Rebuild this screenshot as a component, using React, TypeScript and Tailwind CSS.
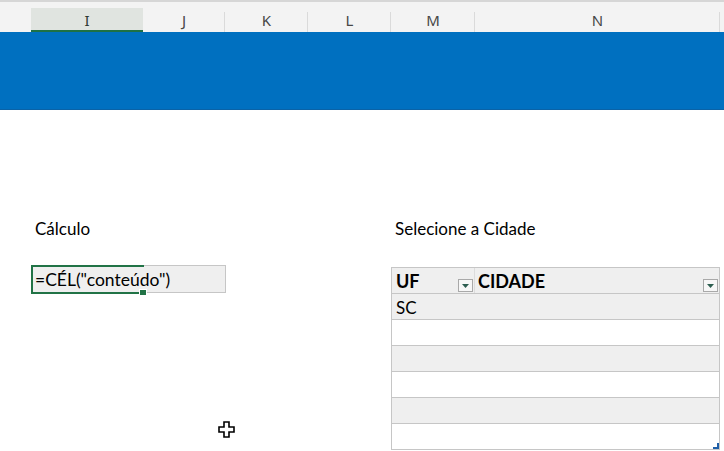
import React from "react";

const cols = [
  { label: "", w: 31 },
  { label: "I", w: 112, sel: true },
  { label: "J", w: 82 },
  { label: "K", w: 83 },
  { label: "L", w: 83 },
  { label: "M", w: 84 },
  { label: "N", w: 245 },
];

function DropBtn() {
  return (
    <div className="flex h-[13px] w-[15px] items-center justify-center border border-[#a9a9a9] bg-[#f7f7f7]">
      <svg width="7" height="4" viewBox="0 0 7 4">
        <path d="M0 0 L7 0 L3.5 4 Z" fill="#2d5e50" />
      </svg>
    </div>
  );
}

export default function App() {
  const rows = ["SC", "", "", "", "", ""];
  return (
    <div
      className="relative h-[451px] w-[724px] overflow-hidden bg-white text-black"
      style={{ fontFamily: "Lato, 'Noto Sans', sans-serif" }}
    >
      {/* Column header */}
      <div className="flex h-[32px] border-t-2 border-[#d6d6d6] bg-[#f3f3f3]">
        {cols.map((c, i) => (
          <div
            key={i}
            style={{ width: c.w }}
            className={
              c.sel
                ? "relative mt-[6px] flex h-[24px] shrink-0 items-center justify-center border-b-2 border-[#1e7145] bg-[#e0e4e0] pt-[2px] text-[15px] text-[#2f3a33]"
                : "relative flex h-[30px] shrink-0 items-center justify-center pt-[7px] text-[15px] text-[#474747]"
            }
          >
            <span style={{ fontFamily: "'Noto Sans', sans-serif" }}>{c.label}</span>
            {i > 1 && (
              <div className="absolute right-0 top-[10px] h-[20px] w-px bg-[#dadada]" />
            )}
          </div>
        ))}
      </div>

      {/* Blue band */}
      <div className="h-[78px] border-b border-[#0a62a6] bg-[#0070c0]" />

      {/* Body */}
      <div className="flex pt-[105px]">
        {/* Left block */}
        <div className="ml-[31px] flex w-[195px] flex-col">
          <div className="flex h-[26px] items-center pl-[4px] pt-[1px] text-[17px]">Cálculo</div>
          <div className="h-[24px]" />
          <div className="relative h-[28px] w-[195px] border border-[#c6c6c6] bg-[#efefef]">
            <div className="absolute -left-px -top-px h-[29px] w-[113px] border-2 border-r-0 border-[#217346]" />
            <div className="absolute left-[108px] top-[24px] h-[5px] w-[6px] bg-[#217346] outline outline-1 outline-white" />
            <div className="relative flex h-full items-center pl-[3px] pt-[1px] text-[17.5px] leading-none">
              =CÉL("conteúdo")
            </div>
          </div>
        </div>

        {/* Right block */}
        <div className="ml-[165px] flex w-[329px] flex-col">
          <div className="flex h-[26px] items-center pl-[4px] pt-[1px] text-[17px]">Selecione a Cidade</div>
          <div className="h-[26px]" />
          <div className="relative border-x border-t border-[#c6c6c6]">
            <div className="flex h-[26px] border-b border-[#c6c6c6] bg-[#efefef]">
              <div className="flex w-[83px] shrink-0 items-center justify-between border-r border-[#dcdcdc] pl-[4px] pr-[1px]">
                <span className="pt-[2px] text-[18px] font-bold">UF</span>
                <div className="self-end pb-[1px]">
                  <DropBtn />
                </div>
              </div>
              <div className="flex flex-1 items-center justify-between pl-[3px] pr-[1px]">
                <span className="pt-[2px] text-[18px] font-bold">CIDADE</span>
                <div className="self-end pb-[1px]">
                  <DropBtn />
                </div>
              </div>
            </div>
            {rows.map((r, i) => (
              <div
                key={i}
                className={
                  i % 2 === 0
                    ? "flex h-[26px] items-center border-b border-[#c6c6c6] bg-[#efefef] pl-[4px] pt-[2px] text-[17px]"
                    : "flex h-[26px] items-center border-b border-[#c6c6c6] bg-white pl-[4px] pt-[2px] text-[17px]"
                }
              >
                {r}
              </div>
            ))}
            <svg className="absolute bottom-[1px] right-0" width="6" height="6" viewBox="0 0 6 6">
              <path d="M6 0 L6 6 L0 6 L0 4 L4 4 L4 0 Z" fill="#1f5fa8" />
            </svg>
          </div>
        </div>
      </div>

      {/* Cursor */}
      <svg className="absolute left-[218px] top-[421px]" width="18" height="17" viewBox="0 0 18 17">
        <path
          d="M6 1 H11 V6 H16 V11 H11 V16 H6 V11 H1 V6 H6 Z"
          fill="white"
          stroke="black"
          strokeWidth="1.6"
        />
      </svg>
    </div>
  );
}
